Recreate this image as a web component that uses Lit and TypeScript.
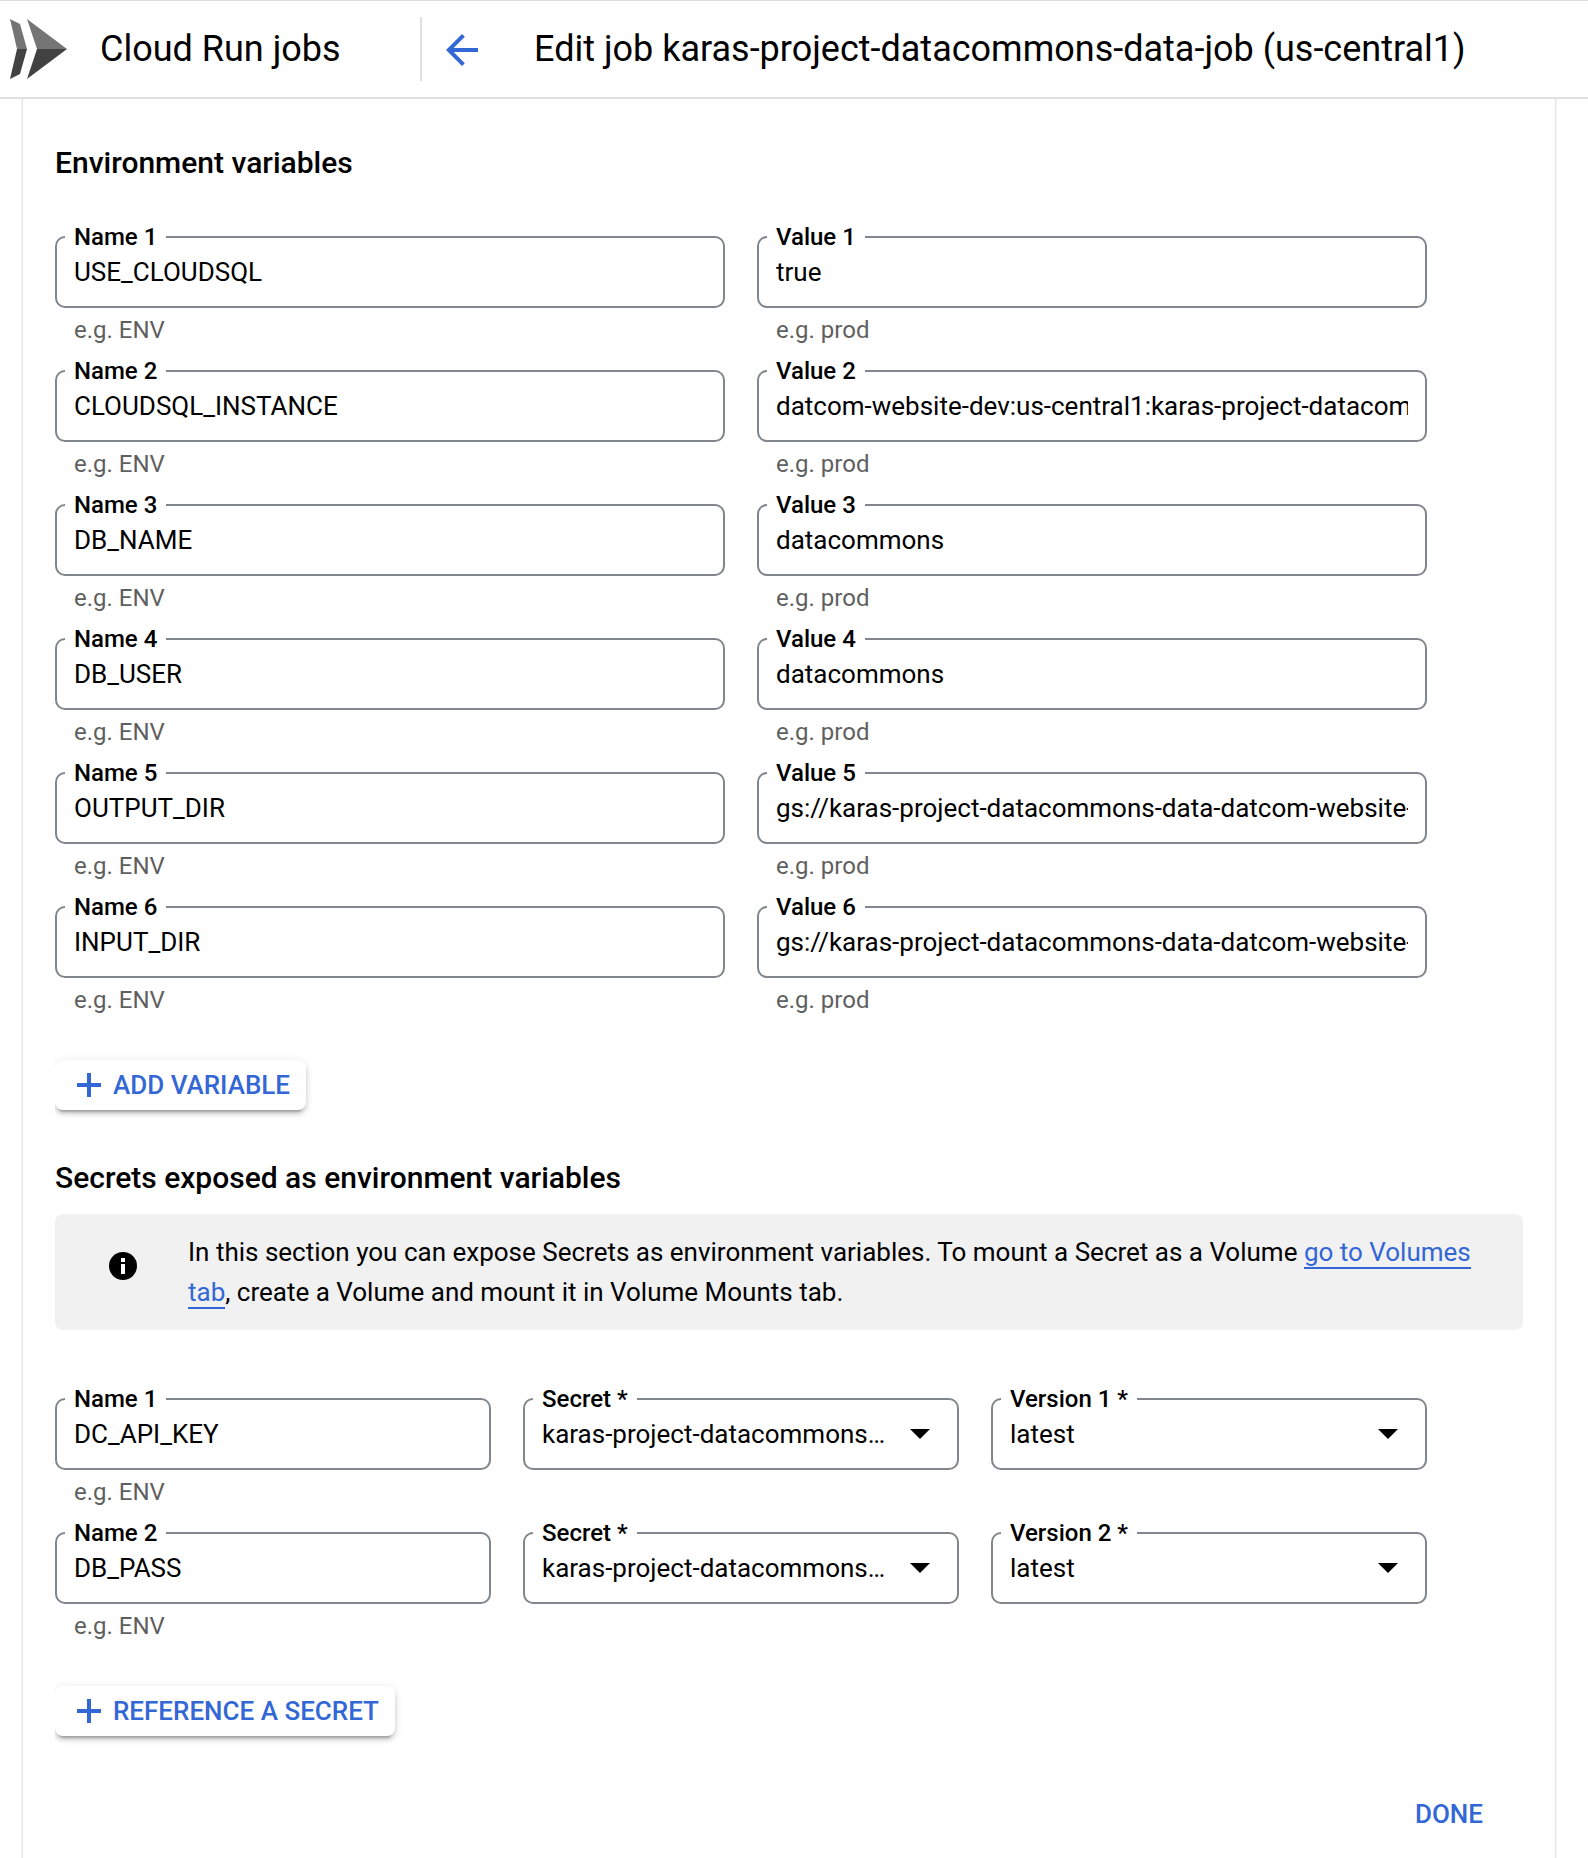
import { LitElement, html, css, svg, nothing } from "lit";
import { customElement, property } from "lit/decorators.js";

const plusIcon = svg`<path d="M10 0h4v10h10v4H14v10h-4V14H0v-4h10z" fill="currentColor" />`;

/** Outlined field: floating label in the border, text box or drop-down, hint below. */
@customElement("outlined-field")
export class OutlinedField extends LitElement {
  @property() label = "";
  @property() value = "";
  @property() hint = "";
  @property() kind: "text" | "select" = "text";

  static styles = css`
    :host {
      display: block;
      min-width: 0;
    }
    .box {
      position: relative;
      display: flex;
      align-items: center;
      height: 72px;
      box-sizing: border-box;
      border: 2px solid #80868b;
      border-radius: 10px;
    }
    .label {
      position: absolute;
      top: -17px;
      left: 8px;
      padding: 0 9px;
      background: #fff;
      color: #000;
      font-size: 24px;
      font-weight: 500;
      line-height: 32px;
      white-space: nowrap;
    }
    .control {
      flex: 1;
      min-width: 0;
      width: 100%;
      height: 48px;
      margin: 0 17px;
      padding: 0;
      border: 0;
      outline: 0;
      background: transparent;
      color: #000;
      font: inherit;
      font-size: 26px;
      appearance: none;
    }
    .select {
      margin-right: 0;
      padding-right: 66px;
      text-overflow: ellipsis;
      overflow: hidden;
      white-space: nowrap;
    }
    .arrow {
      position: absolute;
      right: 27px;
      width: 20px;
      height: 10px;
      pointer-events: none;
    }
    .hint {
      margin: 6px 0 0 19px;
      color: #5f5f5f;
      font-size: 24px;
      line-height: 32px;
    }
  `;

  render() {
    return html`
      <div class="box">
        <label class="label" for="control">${this.label}</label>
        ${this.kind === "select"
          ? html`<select class="control select" id="control">
                <option selected>${this.value}</option>
              </select>
              <svg class="arrow" viewBox="0 0 20 10" aria-hidden="true">
                <path d="M0 0h20L10 10z" />
              </svg>`
          : html`<input class="control" id="control" type="text" .value=${this.value} />`}
      </div>
      ${this.hint ? html`<div class="hint">${this.hint}</div>` : nothing}
    `;
  }
}

const variables: [string, string][] = [
  ["USE_CLOUDSQL", "true"],
  ["CLOUDSQL_INSTANCE", "datcom-website-dev:us-central1:karas-project-datacommons-mysql"],
  ["DB_NAME", "datacommons"],
  ["DB_USER", "datacommons"],
  ["OUTPUT_DIR", "gs://karas-project-datacommons-data-datcom-website-dev/output"],
  ["INPUT_DIR", "gs://karas-project-datacommons-data-datcom-website-dev/input"],
];

const secrets: [string, string, string][] = [
  ["DC_API_KEY", "karas-project-datacommons-dc-api-key", "latest"],
  ["DB_PASS", "karas-project-datacommons-db-pass", "latest"],
];

@customElement("app-root")
export class AppRoot extends LitElement {
  static styles = css`
    :host {
      display: flex;
      flex-direction: column;
      min-height: 100vh;
      box-sizing: border-box;
      background: #fff;
      color: #000;
      font-family: Roboto, "Liberation Sans", sans-serif;
      font-size: 26px;
      line-height: 40px;
    }
    .header {
      display: flex;
      align-items: center;
      height: 96px;
      border-top: 1px solid #dadce0;
      border-bottom: 2px solid #e0e0e0;
    }
    .logo {
      width: 58px;
      height: 60px;
      margin-left: 10px;
    }
    .product,
    .title {
      margin: 0;
      font-size: 36px;
      font-weight: 400;
      line-height: 48px;
      white-space: nowrap;
    }
    .product {
      margin-left: 32px;
      width: 320px;
    }
    .divider {
      width: 2px;
      height: 64px;
      background: #e0e0e0;
    }
    .back {
      display: flex;
      width: 48px;
      height: 48px;
      margin: 2px 48px 0 16px;
      padding: 0;
      border: 0;
      background: none;
      color: #3367d6;
    }
    .card {
      flex: 1;
      margin: 0 32px 0 22px;
      padding: 44px 32px 20px;
      border: solid #e4e4e4;
      border-width: 0 1px;
      box-shadow: -1px 0 #f4f4f4, 1px 0 #f4f4f4;
    }
    .heading {
      margin: 0;
      font-size: 30px;
      font-weight: 500;
      line-height: 40px;
    }
    .rows {
      display: grid;
      gap: 24px;
      margin: 53px 96px 0 0;
    }
    .row {
      display: grid;
      grid-template-columns: 1fr 1fr;
      gap: 32px;
    }
    .thirds {
      grid-template-columns: 1fr 1fr 1fr;
    }
    .action {
      display: inline-flex;
      align-items: center;
      gap: 12px;
      height: 50px;
      margin-top: 44px;
      padding: 0 16px 0 22px;
      border: 0;
      border-radius: 8px;
      background: #fff;
      box-shadow: 0 6px 2px -4px rgba(0, 0, 0, 0.2), 0 4px 4px rgba(0, 0, 0, 0.14),
        0 2px 10px rgba(0, 0, 0, 0.12);
      clip-path: inset(-20px -20px -20px 0);
      color: #3367d6;
      font: inherit;
      font-weight: 500;
      white-space: nowrap;
    }
    .plus {
      width: 24px;
      height: 24px;
    }
    .secrets {
      margin-top: 48px;
    }
    .notice {
      display: flex;
      align-items: flex-start;
      gap: 51px;
      margin-top: 16px;
      padding: 18px 48px 18px 54px;
      border-radius: 8px;
      background: #f1f1f1;
    }
    .info {
      flex: none;
      width: 28px;
      height: 28px;
      margin-top: 20px;
    }
    .text {
      margin: 0;
    }
    .link {
      border-bottom: 2px solid #3367d6;
      color: #3367d6;
      text-decoration: none;
    }
    .secret-rows {
      margin-top: 68px;
    }
    .footer {
      display: flex;
      justify-content: flex-end;
      margin-top: 58px;
      padding-right: 24px;
    }
    .done {
      padding: 0 16px;
      border: 0;
      background: none;
      color: #3367d6;
      font: inherit;
      font-weight: 500;
    }
  `;

  render() {
    return html`
      <header class="header">
        <svg class="logo" viewBox="0 0 58 60" aria-hidden="true">
          <path d="M0 0l10 5 7 25H7zM17 0l40 30H27z" fill="#757575" />
          <path d="M0 60l10-5 7-25H7zM17 60l40-30H27z" fill="#424242" />
        </svg>
        <div class="product">Cloud Run jobs</div>
        <div class="divider"></div>
        <button class="back" type="button" aria-label="Back">
          <svg width="48" height="48" viewBox="0 0 24 24" aria-hidden="true">
            <path
              d="M20 11H7.83l5.59-5.59L12 4l-8 8 8 8 1.41-1.41L7.83 13H20v-2z"
              fill="currentColor"
            />
          </svg>
        </button>
        <h1 class="title">Edit job karas-project-datacommons-data-job (us-central1)</h1>
      </header>
      <main class="card">
        <section>
          <h2 class="heading">Environment variables</h2>
          <div class="rows">
            ${variables.map(
              ([name, value], i) => html`<div class="row">
                <outlined-field label="Name ${i + 1}" .value=${name} hint="e.g. ENV"></outlined-field>
                <outlined-field label="Value ${i + 1}" .value=${value} hint="e.g. prod"></outlined-field>
              </div>`,
            )}
          </div>
          <button class="action" type="button">
            <svg class="plus" viewBox="0 0 24 24" aria-hidden="true">${plusIcon}</svg>ADD VARIABLE
          </button>
        </section>
        <section class="secrets">
          <h2 class="heading">Secrets exposed as environment variables</h2>
          <div class="notice">
            <svg class="info" viewBox="0 0 28 28" aria-hidden="true">
              <circle cx="14" cy="14" r="14" />
              <path d="M12 6h4v4h-4zM12 12h4v10h-4z" fill="#fff" />
            </svg>
            <p class="text">
              In this section you can expose Secrets as environment variables. To mount a Secret as a
              Volume <a class="link" href="#volumes">go to Volumes tab</a>, create a Volume and mount
              it in Volume Mounts tab.
            </p>
          </div>
          <div class="rows secret-rows">
            ${secrets.map(
              ([name, secret, version], i) => html`<div class="row thirds">
                <outlined-field label="Name ${i + 1}" .value=${name} hint="e.g. ENV"></outlined-field>
                <outlined-field kind="select" label="Secret *" .value=${secret}></outlined-field>
                <outlined-field kind="select" label="Version ${i + 1} *" .value=${version}></outlined-field>
              </div>`,
            )}
          </div>
          <button class="action" type="button">
            <svg class="plus" viewBox="0 0 24 24" aria-hidden="true">${plusIcon}</svg>REFERENCE A SECRET
          </button>
        </section>
        <div class="footer"><button class="done" type="button">DONE</button></div>
      </main>
    `;
  }
}
